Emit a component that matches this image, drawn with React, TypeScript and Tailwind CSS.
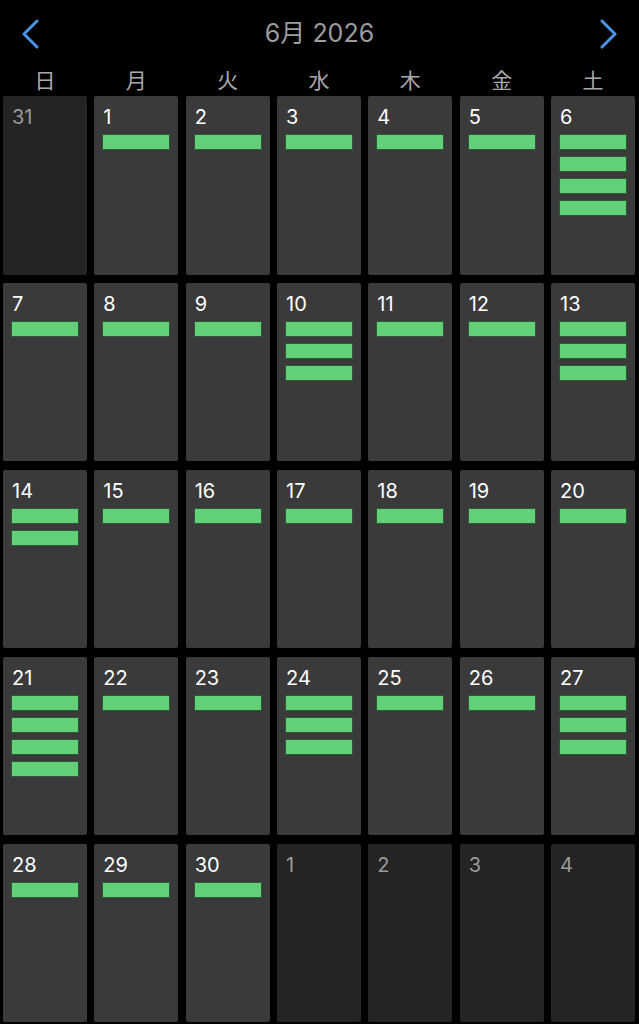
import React from "react";

// month view for June 2026, events shown as green bars per day
type Day = { n: number; inMonth: boolean; events: number };

const counts: Record<number, number> = {
  1: 1, 2: 1, 3: 1, 4: 1, 5: 1, 6: 4,
  7: 1, 8: 1, 9: 1, 10: 3, 11: 1, 12: 1, 13: 3,
  14: 2, 15: 1, 16: 1, 17: 1, 18: 1, 19: 1, 20: 1,
  21: 4, 22: 1, 23: 1, 24: 3, 25: 1, 26: 1, 27: 3,
  28: 1, 29: 1, 30: 1,
};

const days: Day[] = [
  { n: 31, inMonth: false, events: 0 },
  ...Array.from({ length: 30 }, (_, i) => ({ n: i + 1, inMonth: true, events: counts[i + 1] ?? 0 })),
  ...[1, 2, 3, 4].map((n) => ({ n, inMonth: false, events: 0 })),
];

const weekdays = ["日", "月", "火", "水", "木", "金", "土"];

const Chevron = ({ dir }: { dir: "left" | "right" }) => (
  <svg width="18" height="30" viewBox="0 0 18 30" fill="none">
    <polyline
      points={dir === "left" ? "15,2 2,15 15,28" : "3,2 16,15 3,28"}
      stroke="#4a93e6"
      strokeWidth="3"
      strokeLinecap="round"
      strokeLinejoin="round"
    />
  </svg>
);

const DayCell = ({ day }: { day: Day }) => (
  <div
    className={`rounded-[2px] px-[8px] pt-[9px] ${day.inMonth ? "bg-[#3a3a3a]" : "bg-[#242424]"}`}
  >
    <div
      className={`pl-[1px] text-[20px] leading-[24px] ${day.inMonth ? "text-white" : "text-[#9a9a9a]"}`}
    >
      {day.n}
    </div>
    {day.events > 0 && (
      <div className="mt-[5px] flex flex-col gap-[6px]">
        {Array.from({ length: day.events }).map((_, i) => (
          <div key={i} className="h-[16px] rounded-[1px] border border-[#2c5a36] bg-[#62d078]" />
        ))}
      </div>
    )}
  </div>
);

export default function App() {
  return (
    <div
      className="min-h-[1024px] w-full bg-black"
      style={{ fontFamily: '"Inter", "Noto Sans CJK JP", sans-serif' }}
    >
      <div className="flex h-[66px] items-center justify-between px-[22px] pt-[2px]">
        <Chevron dir="left" />
        <div className="text-[25px] text-[#9c9c9c]">6月 2026</div>
        <Chevron dir="right" />
      </div>
      <div className="grid h-[30px] grid-cols-7 gap-x-[7.4px] px-[3px] pr-[4px]">
        {weekdays.map((w) => (
          <div key={w} className="text-center text-[21px] leading-[30px] text-[#a9a9a9]">
            {w}
          </div>
        ))}
      </div>
      <div className="grid auto-rows-[178.5px] grid-cols-7 gap-x-[7.4px] gap-y-[8.4px] pl-[3px] pr-[4px]">
        {days.map((d, i) => (
          <DayCell key={i} day={d} />
        ))}
      </div>
    </div>
  );
}
